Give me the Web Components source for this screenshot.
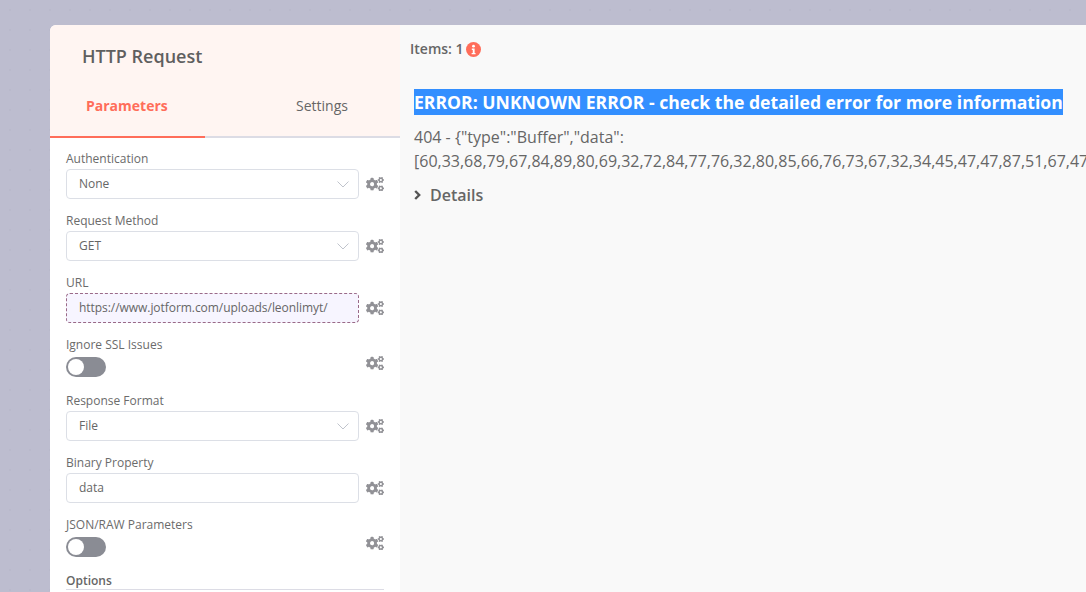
<!DOCTYPE html>
<html>
<head>
<meta charset="utf-8">
<title>HTTP Request</title>
<style>
  html, body { margin: 0; height: 100%; overflow: hidden; }
  body {
    font-family: "Open Sans", "Liberation Sans", sans-serif;
    color: #555;
    background-color: #bdbdcf;
    background-image: radial-gradient(#b9b9cb 0.8px, transparent 1px);
    background-size: 20px 20px;
  }
</style>
</head>
<body>
<node-window>
  <settings-panel slot="left" name="HTTP Request">
    <param-field label="Authentication"><select-box value="None"></select-box></param-field>
    <param-field label="Request Method"><select-box value="GET"></select-box></param-field>
    <param-field label="URL"><text-box value="https://www.jotform.com/uploads/leonlimyt/" expression></text-box></param-field>
    <param-field label="Ignore SSL Issues" kind="toggle"><toggle-switch></toggle-switch></param-field>
    <param-field label="Response Format"><select-box value="File"></select-box></param-field>
    <param-field label="Binary Property"><text-box value="data"></text-box></param-field>
    <param-field label="JSON/RAW Parameters" kind="toggle"><toggle-switch></toggle-switch></param-field>
    <options-head>Options</options-head>
  </settings-panel>
  <output-panel slot="right"></output-panel>
</node-window>

<script>
  const COGS = 'M512.1 191l-8.2 14.3c-3 5.3-9.4 7.5-15.1 5.4-11.8-4.4-22.6-10.7-32.1-18.6-4.6-3.8-5.8-10.5-2.8-15.7l8.2-14.3c-6.9-8-12.3-17.3-15.9-27.4h-16.5c-6 0-11.2-4.3-12.2-10.3-2-12-2.1-24.6 0-37.1 1-6 6.2-10.4 12.2-10.4h16.5c3.6-10.1 9-19.4 15.9-27.4l-8.2-14.3c-3-5.2-1.9-11.9 2.8-15.7 9.5-7.9 20.4-14.2 32.1-18.6 5.7-2.1 12.1.1 15.1 5.4l8.2 14.3c10.5-1.9 21.2-1.9 31.7 0L552 6.3c3-5.3 9.4-7.5 15.1-5.4 11.8 4.4 22.6 10.7 32.1 18.6 4.6 3.8 5.8 10.5 2.8 15.7l-8.2 14.3c6.9 8 12.3 17.3 15.9 27.4h16.5c6 0 11.2 4.3 12.2 10.3 2 12 2.1 24.6 0 37.1-1 6-6.2 10.4-12.2 10.4h-16.5c-3.6 10.1-9 19.4-15.9 27.4l8.2 14.3c3 5.2 1.9 11.9-2.8 15.7-9.5 7.9-20.4 14.2-32.1 18.6-5.7 2.1-12.1-.1-15.1-5.4l-8.2-14.3c-10.4 1.9-21.2 1.9-31.7 0zm-10.5-58.8c38.5 29.6 82.4-14.3 52.8-52.8-38.5-29.7-82.4 14.3-52.8 52.8zM386.3 286.1l33.7 16.8c10.1 5.8 14.5 18.1 10.5 29.1-8.9 24.2-26.4 46.4-42.6 65.8-7.4 8.9-20.2 11.1-30.3 5.3l-29.1-16.8c-16 13.7-34.6 24.6-54.9 31.7v33.6c0 11.6-8.3 21.6-19.7 23.6-24.6 4.2-50.4 4.4-75.9 0-11.5-2-20-11.9-20-23.6V418c-20.3-7.2-38.9-18-54.9-31.7L74 403c-10 5.8-22.9 3.6-30.3-5.3-16.2-19.4-33.3-41.6-42.2-65.7-4-10.9.4-23.2 10.5-29.1l33.3-16.8c-3.9-20.9-3.9-42.4 0-63.4L12 205.8c-10.1-5.8-14.6-18.1-10.5-29 8.9-24.2 26-46.4 42.2-65.8 7.4-8.9 20.2-11.1 30.3-5.3l29.1 16.8c16-13.7 34.6-24.6 54.9-31.7V57.1c0-11.5 8.2-21.5 19.6-23.5 24.6-4.2 50.5-4.4 76-.1 11.5 2 20 11.9 20 23.6v33.6c20.3 7.2 38.9 18 54.9 31.7l29.1-16.8c10-5.8 22.9-3.6 30.3 5.3 16.2 19.4 33.2 41.6 42.1 65.8 4 10.9.1 23.2-10 29.1l-33.7 16.8c3.9 21 3.9 42.5 0 63.5zm-117.6 21.1c59.2-77-28.7-164.9-105.7-105.7-59.2 77 28.7 164.9 105.7 105.7zm243.4 182.7l-8.2 14.3c-3 5.3-9.4 7.5-15.1 5.4-11.8-4.4-22.6-10.7-32.1-18.6-4.6-3.8-5.8-10.5-2.8-15.7l8.2-14.3c-6.9-8-12.3-17.3-15.9-27.4h-16.5c-6 0-11.2-4.3-12.2-10.3-2-12-2.1-24.6 0-37.1 1-6 6.2-10.4 12.2-10.4h16.5c3.6-10.1 9-19.4 15.9-27.4l-8.2-14.3c-3-5.2-1.9-11.9 2.8-15.7 9.5-7.9 20.4-14.2 32.1-18.6 5.7-2.1 12.1.1 15.1 5.4l8.2 14.3c10.5-1.9 21.2-1.9 31.7 0l8.2-14.3c3-5.3 9.4-7.5 15.1-5.4 11.8 4.4 22.6 10.7 32.1 18.6 4.6 3.8 5.8 10.5 2.8 15.7l-8.2 14.3c6.9 8 12.3 17.3 15.9 27.4h16.5c6 0 11.2 4.3 12.2 10.3 2 12 2.1 24.6 0 37.1-1 6-6.2 10.4-12.2 10.4h-16.5c-3.6 10.1-9 19.4-15.9 27.4l8.2 14.3c3 5.2 1.9 11.9-2.8 15.7-9.5 7.9-20.4 14.2-32.1 18.6-5.7 2.1-12.1-.1-15.1-5.4l-8.2-14.3c-10.4 1.9-21.2 1.9-31.7 0zM501.6 431c38.5 29.6 82.4-14.3 52.8-52.8-38.5-29.6-82.4 14.3-52.8 52.8z';

  class NodeWindow extends HTMLElement {
    constructor() {
      super();
      this.attachShadow({ mode: 'open' });
    }

    connectedCallback() {
      this.shadowRoot.innerHTML = `
        <style>
          :host {
            display: block;
            box-sizing: border-box;
            height: 592px;
            padding: 25px 0 0 50px;
            overflow: hidden;
          }
          .window {
            display: flex;
            height: 100%;
            border-radius: 6px 0 0 0;
            overflow: hidden;
          }
        </style>
        <div class="window">
          <slot name="left"></slot>
          <slot name="right"></slot>
        </div>
      `;
    }
  }

  class SettingsPanel extends HTMLElement {
    constructor() {
      super();
      this.attachShadow({ mode: 'open' });
    }

    connectedCallback() {
      const name = this.getAttribute('name');

      this.shadowRoot.innerHTML = `
        <style>
          :host {
            display: block;
            flex: 0 0 350px;
            background: #fff;
          }
          .head {
            background: #fff5f2;
            height: 111px;
            box-sizing: border-box;
          }
          .title {
            padding: 19px 0 0 32px;
            font-size: 18px;
            line-height: 25px;
            font-weight: 600;
            color: #5f5f5f;
          }
          .tabs {
            display: flex;
            margin-top: 27px;
            font-size: 14px;
            line-height: 19px;
          }
          .tab {
            padding: 0 0 0 36px;
            width: 155px;
            box-sizing: border-box;
            color: #ff6d5a;
            font-weight: 700;
          }
          .tab.off {
            padding-left: 91px;
            width: 195px;
            color: #666;
            font-weight: 400;
          }
          .rule {
            display: flex;
            height: 2px;
            background: #dcdce5;
          }
          .rule i {
            width: 155px;
            background: #ff6d5a;
          }
          .body {
            padding: 13px 16px 0;
          }
        </style>
        <div class="head">
          <div class="title">${name}</div>
          <div class="tabs">
            <div class="tab">Parameters</div>
            <div class="tab off">Settings</div>
          </div>
        </div>
        <div class="rule"><i></i></div>
        <div class="body"><slot></slot></div>
      `;
    }
  }

  class ParamField extends HTMLElement {
    constructor() {
      super();
      this.attachShadow({ mode: 'open' });
    }

    connectedCallback() {
      const label = this.getAttribute('label');
      const toggle = this.getAttribute('kind') === 'toggle';

      this.shadowRoot.innerHTML = `
        <style>
          :host {
            display: block;
            margin-bottom: ${toggle ? 8 : 14}px;
          }
          .label {
            font-size: 12px;
            line-height: 16px;
            color: #6b6b6b;
            margin-bottom: ${toggle ? 4 : 2}px;
          }
          .row {
            display: flex;
            align-items: ${toggle ? 'flex-start' : 'center'};
            height: ${toggle ? 28 : 30}px;
          }
          .input {
            flex: 0 0 293px;
          }
          svg {
            margin: ${toggle ? '-1px' : '0'} 0 0 7px;
            width: 18px;
            height: 14.4px;
            fill: #919196;
          }
        </style>
        <div class="label">${label}</div>
        <div class="row">
          <div class="input"><slot></slot></div>
          <svg viewBox="0 0 640 512"><path d="${COGS}"/></svg>
        </div>
      `;
    }
  }

  class SelectBox extends HTMLElement {
    constructor() {
      super();
      this.attachShadow({ mode: 'open' });
    }

    connectedCallback() {
      const value = this.getAttribute('value');

      this.shadowRoot.innerHTML = `
        <style>
          :host {
            display: flex;
            align-items: center;
            justify-content: space-between;
            box-sizing: border-box;
            height: 30px;
            padding: 0 9px 0 12px;
            background: #fff;
            border: 1px solid #dcdfe6;
            border-radius: 4px;
            font-size: 12px;
            color: #666;
          }
          span { margin-top: -2px; }
          svg {
            width: 12px;
            height: 7px;
            fill: none;
            stroke: #c0c4cc;
            stroke-width: 1;
          }
        </style>
        <span>${value}</span>
        <svg viewBox="0 0 12 7"><path d="M.5 .5l5.5 5.5 5.5-5.5"/></svg>
      `;
    }
  }

  class TextBox extends HTMLElement {
    constructor() {
      super();
      this.attachShadow({ mode: 'open' });
    }

    connectedCallback() {
      const value = this.getAttribute('value');
      const expression = this.hasAttribute('expression');

      this.shadowRoot.innerHTML = `
        <style>
          :host {
            display: flex;
            align-items: center;
            box-sizing: border-box;
            height: 30px;
            padding: 0 12px;
            background: ${expression ? '#f7f5ff' : '#fff'};
            border: 1px ${expression ? 'dashed #9a6a88' : 'solid #dcdfe6'};
            border-radius: 4px;
            font-size: 12px;
            color: #666;
            white-space: nowrap;
            overflow: hidden;
          }
          span { margin-top: -2px; letter-spacing: -0.05px; }
        </style>
        <span>${value}</span>
      `;
    }
  }

  class ToggleSwitch extends HTMLElement {
    constructor() {
      super();
      this.attachShadow({ mode: 'open' });
    }

    connectedCallback() {
      this.shadowRoot.innerHTML = `
        <style>
          :host {
            display: block;
            width: 40px;
            height: 20px;
            border-radius: 10px;
            background: #8a8c94;
            padding: 2px;
            box-sizing: border-box;
          }
          i {
            display: block;
            width: 16px;
            height: 16px;
            border-radius: 50%;
            background: #fff;
          }
        </style>
        <i></i>
      `;
    }
  }

  class OptionsHead extends HTMLElement {
    constructor() {
      super();
      this.attachShadow({ mode: 'open' });
    }

    connectedCallback() {
      this.shadowRoot.innerHTML = `
        <style>
          :host {
            display: block;
            width: 318px;
            height: 17px;
            box-sizing: border-box;
            border-bottom: 1px solid #dcdce5;
            font-size: 12px;
            line-height: 16px;
            font-weight: 600;
            color: #666;
          }
        </style>
        <slot></slot>
      `;
    }
  }

  class OutputPanel extends HTMLElement {
    constructor() {
      super();
      this.attachShadow({ mode: 'open' });
    }

    connectedCallback() {
      this.shadowRoot.innerHTML = `
        <style>
          :host {
            display: block;
            flex: 1 1 auto;
            min-width: 0;
            background: #f9f9f9;
            overflow: hidden;
            color: #666;
          }
          .items {
            display: flex;
            align-items: center;
            gap: 2px;
            padding: 15px 0 0 10px;
            font-size: 14px;
            line-height: 18px;
            font-weight: 600;
            height: 18px;
          }
          .items svg {
            width: 15px;
            height: 15px;
          }
          .error {
            padding: 31px 0 0 14px;
            width: 650px;
          }
          .message {
            font-size: 17.6px;
            line-height: 26px;
            font-weight: 700;
            white-space: nowrap;
          }
          .message span {
            display: inline-block;
            background: #338fff;
            color: #fff;
          }
          .detail {
            margin-top: 10px;
            font-size: 16px;
            line-height: 24px;
          }
          .more {
            display: flex;
            align-items: center;
            margin-top: 11px;
            font-size: 16px;
            line-height: 22px;
            font-weight: 600;
          }
          .more svg {
            width: 7px;
            height: 10px;
            margin-right: 9px;
            fill: none;
            stroke: #555;
            stroke-width: 2.4;
          }
        </style>
        <div class="items">
          <span>Items: 1</span>
          <svg viewBox="0 0 16 16">
            <circle cx="8" cy="8" r="8" fill="#ff6d5a"/>
            <circle cx="8" cy="4.4" r="1.5" fill="#fff"/>
            <path d="M6.2 7h3v4.6h1v1.4H6v-1.4h1.2V8.4h-1z" fill="#fff"/>
          </svg>
        </div>
        <div class="error">
          <div class="message"><span>ERROR: UNKNOWN ERROR - check the detailed error for more information</span></div>
          <div class="detail">404 - {"type":"Buffer","data":[60,33,68,79,67,84,89,80,69,32,72,84,77,76,32,80,85,66,76,73,67,32,34,45,47,47,87,51,67,47,47,68,84,68,32,72,84,77,76,32,52,46,48,49]}</div>
          <div class="more">
            <svg viewBox="0 0 7 10"><path d="M1.2 1l4 4-4 4"/></svg>
            <span>Details</span>
          </div>
        </div>
      `;
    }
  }

  customElements.define('node-window', NodeWindow);
  customElements.define('settings-panel', SettingsPanel);
  customElements.define('param-field', ParamField);
  customElements.define('select-box', SelectBox);
  customElements.define('text-box', TextBox);
  customElements.define('toggle-switch', ToggleSwitch);
  customElements.define('options-head', OptionsHead);
  customElements.define('output-panel', OutputPanel);
</script>
</body>
</html>
